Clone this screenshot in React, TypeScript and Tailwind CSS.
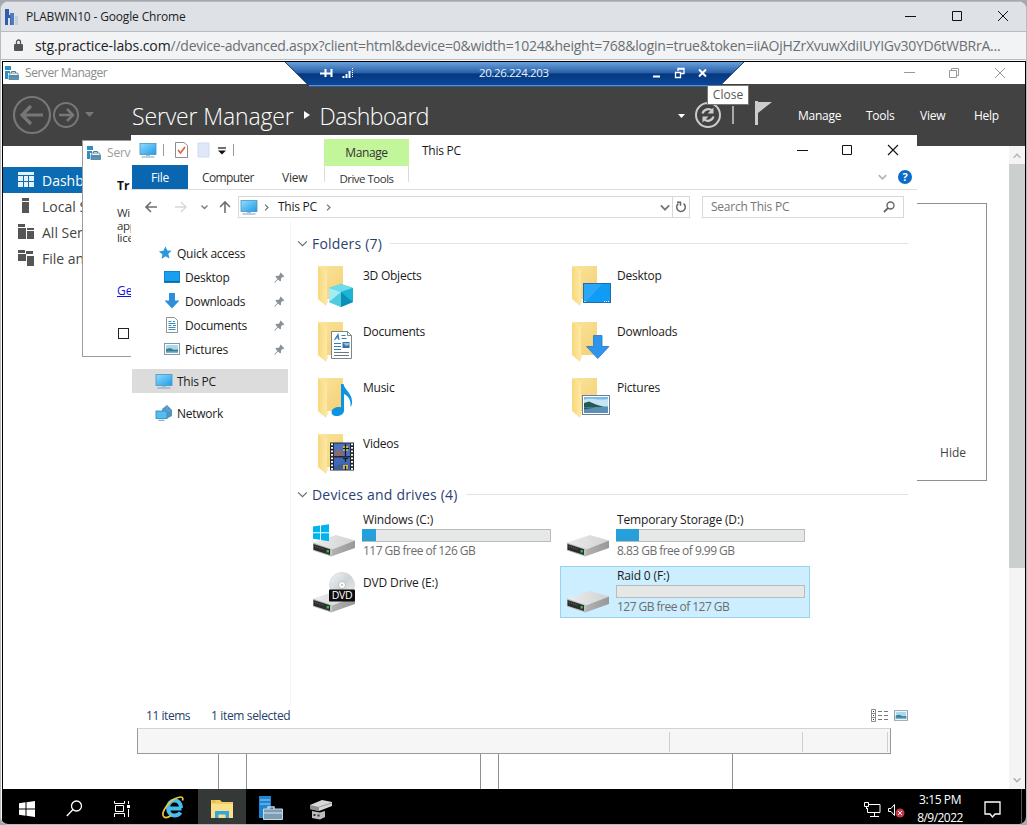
import React from "react";

type P = { className?: string };

const Monitor = ({ className = "w-[18px] h-[16px]" }: P) => (
  <svg viewBox="0 0 18 16" className={className}>
    <defs>
      <linearGradient id="mon" x1="0" y1="0" x2="1" y2="1">
        <stop offset="0" stopColor="#8fdcff" />
        <stop offset="1" stopColor="#1f9be6" />
      </linearGradient>
    </defs>
    <rect x="1" y="1.500" width="16" height="11" fill="url(#mon)" stroke="#4f93bd" strokeWidth=".8" />
    <path d="M7 13.500h4" stroke="#9cc0d4" strokeWidth="1" />
    <path d="M2.500 15h13" stroke="#6fa6c4" strokeWidth="1" />
  </svg>
);

const ServerIcon = ({ className = "w-[14px] h-[14px]" }: P) => (
  <svg viewBox="0 0 14 14" className={className}>
    <path d="M0 0h6v4H0zM0 5h5v2H3v6H0z" fill="#2f8fc0" />
    <path d="M6.500 7V5.500h4V7" fill="none" stroke="#4b7f9c" />
    <path d="M5 7h7.500l1 2.500H4z" fill="#e9f2f7" stroke="#4b7f9c" strokeWidth=".8" />
    <rect x="4" y="10" width="9.500" height="3.500" fill="#5d93b2" stroke="#4b7f9c" strokeWidth=".8" />
  </svg>
);

const Pin = () => (
  <svg viewBox="0 0 12 12" className="w-[11px] h-[11px]">
    <path d="M7.200.6l4.200 4.200-1 .6-.8-.2-2 2 .1 2.200-1 1-2.300-2.300L1 11.600l-.6-.5L3.700 7.500 1.500 5.200l1-1 2.200.1 2-2-.2-.8z" fill="#8a9299" />
  </svg>
);

const Chevron = ({ className }: P) => (
  <svg viewBox="0 0 12 8" className={className} fill="none" stroke="currentColor" strokeWidth="1.300">
    <path d="M1 1.500l5 5 5-5" />
  </svg>
);

const BoldChevron = ({ className }: P) => (
  <svg viewBox="0 0 12 8" className={className} fill="none" stroke="currentColor" strokeWidth="2.200">
    <path d="M1 1.500l5 5 5-5" />
  </svg>
);

const MiniPicture = ({ className = "w-4 h-3" }: P) => (
  <svg viewBox="0 0 16 12" className={className}>
    <rect x=".5" y=".5" width="15" height="11" fill="#fff" stroke="#8796a0" />
    <rect x="2" y="2" width="12" height="8" fill="#a9d9f2" />
    <path d="M2 6l4-1 4 1.800 4-.3V10H2z" fill="#3f7f92" />
    <path d="M2 8.500h12V10H2z" fill="#78b5d8" />
  </svg>
);

const Folder = ({ children }: { children?: React.ReactNode }) => (
  <svg viewBox="0 0 46 44" className="w-[46px] h-[44px]">
    <defs>
      <linearGradient id="fback" x1="0" y1="0" x2="1" y2="1">
        <stop offset="0" stopColor="#fbe59c" />
        <stop offset="1" stopColor="#f3cf74" />
      </linearGradient>
      <linearGradient id="ffront" x1="0" y1="0" x2="1" y2="0">
        <stop offset="0" stopColor="#f7d77c" />
        <stop offset="1" stopColor="#fee9a6" />
      </linearGradient>
    </defs>
    <path d="M3 1h25v33H12z" fill="url(#fback)" />
    <path d="M3 1.500l9 4.500v31l-1.500 3.500L3 34z" fill="url(#ffront)" />
    <path d="M10.500 40.500L12 37V34" stroke="#f2d387" strokeWidth=".6" fill="none" />
    {children}
  </svg>
);

const Cube = () => (
  <g>
    <path d="M26 19l12 4v14l-12 5-12-5V23z" fill="#35c0dd" />
    <path d="M26 19l12 4-12 4-12-4z" fill="#6bdcec" />
    <path d="M14 23l12 4v15l-12-5z" fill="#a5ebf3" />
    <path d="M26 27v15l-12-5z" fill="#4fcbe0" />
    <path d="M26 27l12-4v14z" fill="#1cb3d6" />
    <path d="M26 27v15l12-5z" fill="#0792b5" />
  </g>
);

const DesktopOverlay = () => (
  <g>
    <rect x="14.500" y="18.500" width="27" height="19" fill="#109bf5" stroke="#1f6ea5" />
    <path d="M15 19h18L17 37h-2z" fill="#2ba7f8" />
    <path d="M15.500 36.500h2M35 36.500h5" stroke="#fff" strokeDasharray="1 1" />
  </g>
);

const DocOverlay = () => (
  <g>
    <path d="M16.500 10.500h16l4 4v23h-20z" fill="#fff" stroke="#7d868c" />
    <path d="M32.500 10.500v4h4" fill="none" stroke="#7d868c" />
    <path d="M19.500 19l3.500-5.500 1 5.500M20.500 17h3M26.500 14.500h4M26.500 17.500h5M19 22.500h7M19 25.500h7M19 28.500h7" stroke="#2b7fb8" fill="none" strokeWidth="1.200" />
    <rect x="27.500" y="21" width="7" height="6" fill="#3f6f9f" />
    <path d="M28 22h6v2l-3 1z" fill="#8cc2e8" />
    <path d="M19 31.500h15M19 34.500h15" stroke="#6d7880" />
  </g>
);

const DownOverlay = () => (
  <path d="M24.500 14.500h8.500v11h7L28.700 37.500 17.500 25.500h7z" fill="#2f95ec" stroke="#2579c6" strokeWidth=".8" />
);

const MusicOverlay = () => (
  <path d="M26 7h2.500c1 6.500 9.500 9 8.500 19.500-.3 1.500-1 3-1.600 3.500C36.500 23 33 18.500 29 17v16.500c0 3-3 5.500-7 5.500s-6-2-5.300-4.800c.8-3 5-5 9.300-3.900z" fill="#0c93e4" />
);

const PictureOverlay = () => (
  <g>
    <rect x="13.500" y="18.500" width="27" height="19" fill="#fff" stroke="#6d7f96" />
    <rect x="15" y="20" width="24" height="16" fill="#79bbe6" />
    <path d="M15 23c6-3 14 1 24-1v7H15z" fill="#c6e4f4" />
    <path d="M15 26l5-1.500 7 3 8 2.500H15z" fill="#245b50" />
    <path d="M15 30h24v6H15z" fill="#5c8fb4" />
    <path d="M15 32.500l12-2H15z" fill="#2d5872" />
  </g>
);

const VideoOverlay = () => (
  <g>
    <rect x="15" y="9.500" width="24" height="28" fill="#23262b" />
    <rect x="19" y="10.500" width="16" height="12.500" fill="#4a72c4" />
    <rect x="19" y="24.500" width="16" height="12.500" fill="#3f68b8" />
    <path d="M19 19l5-3 3 3 3 4H19z" fill="#8b6a6e" />
    <path d="M19 33l6-2 10 2v4H19z" fill="#3c5f9c" />
    <path d="M28 13h5v5h-5zM28 32h5v4h-5z" fill="#dcb132" />
    <path d="M30.500 11v12M28 15.500h6M28 25.500h5M30.500 25v4M30.500 33v4" stroke="#17191d" strokeWidth="1.200" />
    <path d="M17 10.500v27M37 10.500v27" stroke="#fff" strokeWidth="2" strokeDasharray="1.800 1.700" />
  </g>
);

const Drive = ({ kind }: { kind?: "win" | "dvd" }) => (
  <svg viewBox="0 0 46 44" className="w-[46px] h-[44px]">
    <defs>
      <linearGradient id="dtop" x1="0" y1="0" x2="1" y2="0">
        <stop offset="0" stopColor="#ececec" />
        <stop offset="1" stopColor="#d2d2d2" />
      </linearGradient>
      <linearGradient id="dside" x1="0" y1="0" x2="1" y2="0">
        <stop offset="0" stopColor="#b3b3b3" />
        <stop offset="1" stopColor="#989898" />
      </linearGradient>
      <linearGradient id="disc" x1="0" y1="0" x2="1" y2="1">
        <stop offset="0" stopColor="#f4f6f6" />
        <stop offset=".5" stopColor="#cfd4d6" />
        <stop offset="1" stopColor="#eef0f0" />
      </linearGradient>
    </defs>
    <path d="M1 29.500L24 22l19 5.500-23 9z" fill="url(#dtop)" />
    <path d="M20 36.500l23-9V35l-24 8.500z" fill="url(#dside)" />
    <path d="M1 29.500l19 6.500-1 7.500L1 37.500z" fill="#b9bcbc" />
    <path d="M1.500 31l16.500 5.200v5.800L1.500 36.800z" fill="#2a2d2c" />
    <path d="M3 33.500l9 3" stroke="#6d7070" strokeDasharray="1 1" />
    <rect x="14.500" y="37" width="2.500" height="2.500" fill="#35b84a" />
    {kind === "win" && (
      <path d="M1 13.600l7-1v6.600H1zM9 12.400L17 11.200v8H9zM1 20.200h7v6.600l-7-1zM9 20.200h8v8l-8-1.200z" fill="#00b4f0" />
    )}
    {kind === "dvd" && (
      <g>
        <circle cx="30" cy="16" r="12.500" fill="url(#disc)" stroke="#c8cccd" strokeWidth=".6" />
        <circle cx="30" cy="16" r="3.500" fill="#fff" stroke="#aeb3b5" strokeWidth=".8" />
        <circle cx="30" cy="16" r="1.300" fill="#c9cdcf" />
        <rect x="17" y="20.500" width="26" height="12" rx="1" fill="#0c0c0c" />
        <text x="30" y="30.300" textAnchor="middle" fontSize="10.500" fill="#fff" fontFamily="Open Sans, sans-serif">DVD</text>
      </g>
    )}
  </svg>
);

const folders = [
  { name: "3D Objects", art: <Cube /> },
  { name: "Desktop", art: <DesktopOverlay /> },
  { name: "Documents", art: <DocOverlay /> },
  { name: "Downloads", art: <DownOverlay /> },
  { name: "Music", art: <MusicOverlay /> },
  { name: "Pictures", art: <PictureOverlay /> },
  { name: "Videos", art: <VideoOverlay /> },
];

type DriveInfo = { name: string; kind?: "win" | "dvd"; fill?: number; free?: string; selected?: boolean };
const drives: DriveInfo[] = [
  { name: "Windows (C:)", kind: "win", fill: 14, free: "117 GB free of 126 GB" },
  { name: "Temporary Storage (D:)", fill: 23, free: "8.83 GB free of 9.99 GB" },
  { name: "DVD Drive (E:)", kind: "dvd" },
  { name: "Raid 0 (F:)", fill: 0, free: "127 GB free of 127 GB", selected: true },
];

const GroupTitle = ({ children, className = "" }: { children: React.ReactNode; className?: string }) => (
  <div className={"flex items-center pl-[6px] text-[14px] tracking-[0.2px] text-[#2b3f72] " + className}>
    <Chevron className="w-[11px] h-[7px] text-[#5f6b78]" />
    <span className="ml-1 whitespace-nowrap">{children}</span>
    <span className="ml-2 h-px flex-1 bg-[#e2e3e4]" />
  </div>
);

const NavPane = () => (
  <div className="flex w-[160px] shrink-0 flex-col border-r border-[#f3f3f3] pt-[19px]">
    <div className="flex h-6 items-center pl-[27px]">
      <svg viewBox="0 0 14 14" className="w-[14px] h-[14px]">
        <path d="M7.500.5l1.800 4 4.400.2-3.400 3 1.200 4.800-4-2.300L3.500 13l1-4.500L.8 5.600l4.500-.8z" fill="#2b97dc" />
      </svg>
      <span className="ml-[5px] mt-px">Quick access</span>
    </div>
    {[
      ["Desktop", <svg key="d" viewBox="0 0 16 12" className="w-4 h-3"><rect x=".5" y=".5" width="15" height="11" fill="#17a0f2" stroke="#1683c8" /><path d="M1 10.500h14" stroke="#0b659f" /></svg>],
      ["Downloads", <svg key="w" viewBox="0 0 16 16" className="w-4 h-4"><path d="M5 0h6v7.500h4.500L8 15.500.5 7.500H5z" fill="#2d8fdc" /></svg>],
      ["Documents", <svg key="o" viewBox="0 0 16 16" className="w-4 h-4"><path d="M2.500.5h8l3 3v12h-11z" fill="#fff" stroke="#8a949a" /><path d="M4.500 4.500h3M9 4.500h2M4.500 6.500h7M4.500 8.500h3M9 8.500h3M4.500 10.500h7M4.500 12.500h7" stroke="#3b8cc0" /></svg>],
      ["Pictures", <MiniPicture key="p" />],
    ].map(([name, icon]) => (
      <div key={name as string} className="flex h-6 items-center pl-[33px] pr-[5px]">
        <span className="flex w-4 justify-center">{icon}</span>
        <span className="ml-[5px] mt-px flex-1">{name}</span>
        <Pin />
      </div>
    ))}
    <div className="mt-2 mr-[2px] ml-px flex h-6 items-center bg-[#dcdcdc] pl-[23px]">
      <Monitor />
      <span className="ml-[4px] mt-px">This PC</span>
    </div>
    <div className="mt-2 flex h-6 items-center pl-[24px]">
      <svg viewBox="0 0 18 16" className="w-[18px] h-4">
        <path d="M12 0l5 5v6l-5 2.500L7 10V4z" fill="#4e95bf" />
        <path d="M12 0v12M7.500 4.500c3 1.500 6 1.500 9 0" stroke="#6fb0d4" fill="none" />
        <rect x="1" y="6" width="11" height="7.500" fill="#56bdf0" stroke="#2f83b6" strokeWidth=".8" />
        <path d="M3.500 15.300h6" stroke="#5da0c5" />
      </svg>
      <span className="ml-[4px] mt-px">Network</span>
    </div>
  </div>
);

const Explorer = () => (
  <section className="absolute left-[131px] top-[135px] flex h-[593px] w-[786px] flex-col bg-white text-[12px] tracking-[-0.25px] text-[#1b1b1b]">
    <header className="flex h-[55px] border-b border-[#dcdddd]">
      <div className="flex w-[193px] flex-col">
        <div className="flex h-[31px] items-center pl-2">
          <Monitor />
          <i className="ml-[6px] h-3 w-px bg-[#9a9a9a]" />
          <svg viewBox="0 0 13 16" className="ml-[11px] w-[13px] h-4"><path d="M.5.5h8.500l3.500 3v12H.5z" fill="#fff" stroke="#918b89" /><path d="M3 8l2.500 3L10 5" fill="none" stroke="#d9663e" strokeWidth="1.700" /></svg>
          <svg viewBox="0 0 13 16" className="ml-[9px] w-[13px] h-4"><path d="M1 1h11v14H1z" fill="#dfe7fa" stroke="#cfdaf1" /></svg>
          <svg viewBox="0 0 8 8" className="ml-[8px] mt-[2px] w-2 h-2"><path d="M0 1h8" stroke="#111" strokeWidth="1.200" /><path d="M0 3.500h8L4 7.500z" fill="#111" /></svg>
          <i className="ml-[7px] h-3 w-px bg-[#9a9a9a]" />
        </div>
        <div className="flex h-6 items-center">
          <div className="ml-px flex h-6 w-14 items-center justify-center bg-[#0a66b0] pt-[2px] text-white">File</div>
          <span className="ml-[14px] mt-[2px] w-[52px] whitespace-nowrap tracking-[-0.600px] text-[#333]">Computer</span>
          <span className="ml-[28px] mt-[2px] text-[#333]">View</span>
        </div>
      </div>
      <div className="flex w-[85px] flex-col pt-1 text-[#333]">
        <div className="flex h-[27px] items-center justify-center bg-[#c3f59b] pt-px tracking-[-0.400px]">Manage</div>
        <div className="flex h-[16px] justify-center border-x border-[#dadada] text-[11.500px] leading-[25px] tracking-[-0.500px] whitespace-nowrap">Drive Tools</div>
      </div>
      <div className="flex flex-1 flex-col">
        <div className="flex h-[31px] items-center">
          <span className="ml-[13px] mt-[2px] flex-1">This PC</span>
          <svg viewBox="0 0 102 12" className="mr-[18px] w-[102px] h-3" fill="none" stroke="#111"><path d="M0 6.500h11M45.500 1.500h9v9h-9z" /><path d="M91 1l10 10M101 1L91 11" strokeWidth="1.100" /></svg>
        </div>
        <div className="flex h-6 items-center justify-end pr-[5px]">
          <BoldChevron className="mr-[11px] w-[9px] h-[6px] text-[#b5b5b5]" />
          <span className="flex size-[14px] items-center justify-center rounded-full bg-[#0d6cc8] text-[11px] font-bold text-white">?</span>
        </div>
      </div>
    </header>
    <div className="flex h-8 items-center pt-[2px]">
      <svg viewBox="0 0 92 14" className="ml-[13px] w-[92px] h-[14px]" fill="none">
        <path d="M2 7h11M7 2L2 7l5 5" stroke="#6b6f73" strokeWidth="1.600" />
        <path d="M31 7h11M37 2l5 5-5 5" stroke="#d5d7d9" strokeWidth="1.400" />
        <path d="M57.500 5.500l3 3 3-3" stroke="#777" strokeWidth="1.300" />
        <path d="M81 13V2M76 7l5-5 5 5" stroke="#6b6f73" strokeWidth="1.600" />
      </svg>
      <div className="ml-[2px] flex h-[22px] w-[452px] items-center border border-[#d9d9d9]">
        <Monitor className="ml-[1px] w-[18px] h-4" />
        <BoldChevron className="ml-[5px] w-[7px] h-[5px] -rotate-90 text-[#777]" />
        <span className="ml-[8px]">This PC</span>
        <BoldChevron className="ml-[8px] w-[7px] h-[5px] -rotate-90 text-[#777]" />
        <span className="flex-1" />
        <BoldChevron className="mr-[2px] w-[10px] h-[7px] text-[#777]" />
        <span className="flex h-full w-[17px] items-center justify-center border-l border-[#d9d9d9]">
          <svg viewBox="0 0 12 12" className="w-[12px] h-[12px]" fill="none" stroke="#666" strokeWidth="1.500"><path d="M8.500 2.600A4.300 4.300 0 1 1 3.500 2.600M2 1.200h3.500v3.500" /></svg>
        </span>
      </div>
      <div className="ml-3 flex h-[22px] w-[202px] items-center border border-[#d9d9d9] pl-2 pr-2 text-[#767676]">
        <span className="flex-1">Search This PC</span>
        <svg viewBox="0 0 12 12" className="w-3 h-3" fill="none" stroke="#666"><circle cx="7.500" cy="4.500" r="3.500" strokeWidth="1.400" /><path d="M5 7L1 11" strokeWidth="1.800" /></svg>
      </div>
    </div>
    <div className="flex h-[483px]">
      <NavPane />
      <div className="flex flex-1 flex-col pr-[9px]">
        <GroupTitle className="h-[36px] pt-[6px]">Folders (7)</GroupTitle>
        <div className="grid grid-cols-[254px_250px] auto-rows-[56px] pl-[15px]">
          {folders.map((f) => (
            <div key={f.name} className="flex pl-[9px] pt-[7px]">
              <Folder>{f.art}</Folder>
              <span className="ml-[2px] mt-[1px] h-5 leading-5">{f.name}</span>
            </div>
          ))}
        </div>
        <GroupTitle className="h-[28px] pb-[3px]">Devices and drives (4)</GroupTitle>
        <div className="grid grid-cols-[250px_250px] auto-rows-[52px] gap-1 pl-[15px]">
          {drives.map((d) => (
            <div key={d.name} className={d.selected ? "flex border border-[#99d1f2] bg-[#cceeff] pl-[5px] pr-1" : "flex border border-transparent pl-[5px] pr-1"}>
              <span className="mt-[2px]"><Drive kind={d.kind} /></span>
              <div className={d.kind === "dvd" ? "flex flex-1 flex-col pt-[7px]" : "flex flex-1 flex-col"}>
                <span className="ml-[5px] h-[18px] leading-[17px] tracking-[-0.150px] whitespace-nowrap">{d.name}</span>
                {d.free && (
                  <>
                    <div className="ml-1 h-[13px] w-[189px] border border-[#b9bcbb] bg-[#e5e8e6]">
                      <div className="-ml-px -mt-px h-[12px] bg-[#25a0da]" style={{ width: d.fill }} />
                    </div>
                    <span className="ml-[5px] h-[18px] leading-[18px] tracking-[-0.530px] whitespace-nowrap text-[#6d6d6d]">{d.free}</span>
                  </>
                )}
              </div>
            </div>
          ))}
        </div>
      </div>
    </div>
    <footer className="flex h-[20px] items-center pl-[15px] pr-[9px] text-[#24406b]">
      <span className="mt-[2px] w-[44px] whitespace-nowrap tracking-[-0.450px]">11 items</span>
      <span className="ml-[21px] mt-[2px] flex-1 tracking-[-0.350px]">1 item selected</span>
      <svg viewBox="0 0 17 13" className="w-[17px] h-[13px]" fill="none"><path d="M.5.500h4v12h-4zM.5 4.500h4M.5 8.500h4" stroke="#8a8a8a" /><path d="M7 2.500h4M13 2.500h4M7 6.500h4M13 6.500h4M7 10.500h4M13 10.500h4" stroke="#777" /><path d="M2 2.500h1M2 6.500h1M2 10.500h1" stroke="#333" /></svg>
      <MiniPicture className="ml-[6px] w-[14px] h-[11px]" />
    </footer>
  </section>
);

const TrialDialog = () => (
  <section className="absolute left-[82px] top-[140px] h-[217px] w-[49px] overflow-hidden border border-r-0 border-[#9b9b9b] bg-white">
    <div className="flex h-6 items-center pl-1 text-[12px] text-[#9a9a9a]">
      <ServerIcon className="h-[14px] w-[14px] shrink-0" />
      <span className="ml-[6px] tracking-[-0.200px]">Serve</span>
    </div>
    <div className="pl-[34px] text-[12px] text-[#333]">
      <h3 className="mt-[11px] h-5 leading-5 font-bold text-[#111]">Tr</h3>
      <p className="mt-[11px] leading-[12.500px] text-[11.500px] tracking-[-0.300px]">Wi<br />app<br />lice</p>
      <a className="mt-[36px] block h-5 leading-5 text-[#1414dd] underline">Ge</a>
      <div className="mt-[27px] ml-px size-[11px] border border-[#222]" />
    </div>
  </section>
);

const RdpBar = () => (
  <div className="absolute left-[285px] top-[62px] h-[25px] w-[459px]">
    <svg viewBox="0 0 459 25" className="absolute inset-0 h-full w-full">
      <defs>
        <linearGradient id="rdp" x1="0" y1="0" x2="0" y2="1">
          <stop offset="0" stopColor="#6aa0d8" />
          <stop offset=".42" stopColor="#2a62ab" />
          <stop offset=".48" stopColor="#07387e" />
          <stop offset="1" stopColor="#0a4aa0" />
        </linearGradient>
      </defs>
      <path d="M0 0h459l-25 25H25z" fill="url(#rdp)" />
      <path d="M0 0l25 24.500h409L459 0" fill="none" stroke="#173a6c" />
      <path d="M24 23.800h411" stroke="#7fb0e2" />
    </svg>
    <div className="relative flex h-[22px] items-center">
      <svg viewBox="0 0 34 12" className="ml-[35px] w-[34px] h-3" stroke="#fff" fill="none">
        <path d="M0 6.500h5M5.500 2v8M5 6.500h6M11.500 2v8" strokeWidth="2" />
        <path d="M23.500 9v2M26.500 7v4M29.500 4v7" strokeWidth="2" /><path d="M32.500 1v10" strokeDasharray="1 1" />
      </svg>
      <span className="ml-[125px] w-[70px] whitespace-nowrap text-[11.500px] tracking-[-0.400px] text-[#e6f3ff]">20.26.224.203</span>
      <svg viewBox="0 0 56 12" className="ml-[103px] w-[56px] h-3" stroke="#fff" fill="none">
        <path d="M1 9.500h7" strokeWidth="2" /><path d="M23.500 5.500h5v5h-5zM26 4V1.500h6v5h-3M26 2h6" strokeWidth="1.300" /><path d="M47 2.500l7 7M54 2.500l-7 7" strokeWidth="2" />
      </svg>
    </div>
  </div>
);

const sideItems = [
  { label: "Dashb", d: "M0 0h16v3H0zM0 4h5v5H0zM6 4h4v5H6zM11 4h5v5h-5zM0 10h5v5H0zM6 10h4v5H6zM11 10h5v5h-5z" },
  { label: "Local S", d: "M4 0h7v3H4zM4 4h7v11H4z" },
  { label: "All Ser", d: "M0 0h7v3H0zM0 4h8v11H0zM9 4h7v2H9zM9 7h7v8H9z" },
  { label: "File an", d: "M0 0h7v3H0zM8 1h7v3H8zM0 4h8v7H0zM9 6h7v10H9z" },
];

const ServerManager = () => (
  <>
    <div className="flex h-[22px] items-center bg-white pl-[2px] text-[12px] text-[#8b8b8b]">
      <ServerIcon />
      <span className="ml-[6px] flex-1 tracking-[-0.450px]">Server Manager</span>
      <svg viewBox="0 0 104 12" className="mr-[17px] w-[104px] h-3" fill="none" stroke="#999"><path d="M0 5.500h11M45.500 3.500h7v7h-7zM47.500 3.500v-2h7v7h-2M91 1l10 10M101 1L91 11" /></svg>
    </div>
    <div className="flex h-[62px] items-center bg-[#424242] text-white">
      <svg viewBox="0 0 86 42" className="ml-[9px] w-[86px] h-[42px]" fill="none" stroke="#777">
        <circle cx="20" cy="21" r="18" strokeWidth="2.200" /><path d="M31 21H11M19 12l-9 9 9 9" strokeWidth="3.200" />
        <circle cx="54" cy="21" r="12" strokeWidth="2" /><path d="M47 21h13M55 15l6 6-6 6" strokeWidth="2.600" />
        <path d="M73 18h9l-4.500 5z" fill="#777" stroke="none" />
      </svg>
      <span className="ml-[34px] mt-[2px] whitespace-nowrap text-[23px] font-light tracking-[-0.150px]">Server Manager</span>
      <svg viewBox="0 0 6 8" className="mx-[10px] w-[6px] h-2"><path d="M0 0l6 4-6 4z" fill="#fff" /></svg>
      <span className="mt-[2px] flex-1 text-[23px] font-light tracking-[-0.600px]">Dashboard</span>
      <svg viewBox="0 0 96 40" className="w-[96px] h-10" fill="none" stroke="#ccc">
        <path d="M0 19h7l-3.500 4z" fill="#fff" stroke="none" />
        <circle cx="30" cy="20" r="12" strokeWidth="2" />
        <path d="M24.500 18.500a6 6 0 0 1 10-2.500M35.500 21.500a6 6 0 0 1-10 2.500" strokeWidth="2.200" /><path d="M35.500 12.500v6h-6zM24.500 27.500v-6h6z" fill="#ccc" stroke="none" />
        <path d="M55 11v18" strokeWidth="1.500" />
        <path d="M78.500 6v24" strokeWidth="3" /><path d="M80 7h14L80 18z" fill="#ccc" stroke="none" />
      </svg>
      <nav className="ml-[24px] mt-[2px] flex text-[12px] tracking-[-0.250px]">
        <span className="w-[68px]">Manage</span><span className="w-[54px]">Tools</span><span className="w-[54px]">View</span><span className="w-[51px]">Help</span>
      </nav>
    </div>
    <div className="flex h-[643px] bg-white">
      <div className="w-[79px] overflow-hidden pt-[21px] text-[14px] text-[#444]">
        {sideItems.map((s, i) => (
          <div key={s.label} className={i === 0 ? "flex h-[26px] items-center bg-[#0b6cb4] pl-[15px] text-white" : "flex h-[26px] items-center pl-[15px]"}>
            <svg viewBox="0 0 16 16" className="w-4 h-4 shrink-0"><path d={s.d} fill={i === 0 ? "#e2f1fb" : "#555"} /></svg>
            <span className="ml-2 mt-px whitespace-nowrap">{s.label}</span>
          </div>
        ))}
      </div>
      <div className="flex flex-1 flex-col pr-[22px] pt-[57px] pl-[77px]">
        <div className="flex h-[278px] items-end justify-end border border-l-0 border-[#8f8f8f] pr-5 pb-[18px] text-[12px] text-[#444]">Hide</div>
        <div className="mt-[126px] flex flex-1 gap-[17px]">
          <div className="w-[60px] border-r border-[#8f8f8f]" />
          <div className="ml-[10px] w-[235px] border-x border-[#8f8f8f]" />
          <div className="w-[235px] border-x border-[#8f8f8f]" />
        </div>
      </div>
      <div className="flex w-4 flex-col items-center bg-[#f4f4f4] py-[5px]">
        <BoldChevron className="mt-[2px] w-[8px] h-[6px] rotate-180 text-[#b5b5b5]" />
        <div className="mt-[5px] h-[404px] w-full bg-[#cbcfcd]" />
        <span className="flex-1" />
        <BoldChevron className="mb-px w-[8px] h-[6px] text-[#aaa]" />
      </div>
    </div>
  </>
);

const Taskbar = () => (
  <div className="flex h-[35px] items-center bg-black text-[12px] text-white">
    <div className="flex w-[47px] justify-center"><svg viewBox="0 0 16 16" className="mt-1 w-4 h-4"><path d="M0 2.200l6.500-.9v6.200H0zM7.500 1.200L16 0v7.500H7.500zM0 8.500h6.500v6.200L0 13.800zM7.500 8.500H16V16l-8.500-1.200z" fill="#fff" /></svg></div>
    <div className="flex w-12 justify-center"><svg viewBox="0 0 17 17" className="mt-1 w-[17px] h-[17px]" fill="none" stroke="#fff" strokeWidth="1.300"><circle cx="10.500" cy="6" r="5" /><path d="M7 9.500L.8 16" /></svg></div>
    <div className="flex w-12 justify-center"><svg viewBox="0 0 17 16" className="mt-1 w-[17px] h-4" fill="none" stroke="#fff"><path d="M.5 0v2.500h10V0M1.500 4.500h8v6h-8zM.5 16v-3.500h10V16M14.500 0v3M14.500 8v8" /><path d="M13 4h3v3h-3z" fill="#fff" stroke="none" /></svg></div>
    <div className="flex w-[52px] justify-center pl-[1px]">
      <svg viewBox="0 0 24 24" className="w-6 h-6" fill="none">
        <path d="M20.500 13.500H8.500M20 13c0-5-3-7.500-6.500-7.500S7 8.500 7 13s3 7.500 6.700 7.500c2.500 0 4.500-1 5.800-3" stroke="#46bdee" strokeWidth="4" />
        <path d="M3 22C-1 18 8 5 17 2.500c4-1.300 5.500 0 4.500 3M3 22c1.800 1.200 4.500.2 7-1.500" stroke="#efc63a" strokeWidth="1.700" />
      </svg>
    </div>
    <div className="flex h-full w-12 items-center justify-center bg-[#343836]">
      <svg viewBox="0 0 22 18" className="mt-1 w-[22px] h-[18px]"><path d="M0 0h9l2 2h11v16H0z" fill="#f4cd62" /><path d="M0 4h22v14H0z" fill="#fbe08c" /><path d="M4 18v-7h14v7h-3.500v-3.500h-7V18z" fill="#31a8dc" /><path d="M1.500 1.200h3" stroke="#d59a30" /></svg>
    </div>
    <div className="flex w-[50px] justify-center">
      <svg viewBox="0 0 24 24" className="mt-[3px] w-6 h-6"><path d="M0 0h12v22H0z" fill="#1f86d3" /><path d="M1 4h10M1 8h10" stroke="#bfe2fa" strokeWidth=".8" /><path d="M9 13v-2h6v2" fill="none" stroke="#c5dae7" strokeWidth="1.500" /><path d="M4.500 13h19v10.500h-19z" fill="#7d9db3" stroke="#c5dae7" /><path d="M5 17h18" stroke="#d9e8f1" /></svg>
    </div>
    <div className="flex w-[49px] justify-center">
      <svg viewBox="0 0 22 20" className="mt-[6px] w-[22px] h-5"><path d="M0 5L12 0l10 2v4L9 11 0 9z" fill="#d8d8d8" /><path d="M0 5l9 2v4L0 9z" fill="#8e8e8e" /><path d="M9 7l13-4" stroke="#999" /><path d="M2 11l8 1.500 5-1.500v6l-5 2.500L2 18z" fill="#bdbdbd" /><path d="M3.500 14h2v2h-2zM7.500 14.500h2v2h-2z" fill="#333" /></svg>
    </div>
    <span className="flex-1" />
    <svg viewBox="0 0 42 18" className="mt-2 w-[42px] h-[18px]" fill="none" stroke="#fff">
      <path d="M5 2.500h11v8H3.500V6M6 14.500h9M10.500 11v3M.5.500h4v4h-4zM2.500 5v2" />
      <path d="M24.500 6.500h2.500l3.500-4v11l-3.500-4h-2.500z" /><circle cx="36" cy="11" r="4.500" fill="#c93744" stroke="none" /><path d="M34 9l4 4M38 9l-4 4" />
    </svg>
    <div className="ml-[8px] mt-[4px] w-[52px] whitespace-nowrap text-center leading-[18px] tracking-[-0.400px]">3:15 PM<br /><span className="tracking-[-0.550px]">8/9/2022</span></div>
    <svg viewBox="0 0 17 17" className="mt-[5px] ml-[18px] mr-[20px] w-[17px] h-[17px]" fill="none" stroke="#fff" strokeWidth="1.300"><path d="M1 1h15v12h-5l-2.500 3L6 13H1z" /></svg>
    <i className="mr-[3px] h-full w-px bg-[#555]" />
  </div>
);

export default function App() {
  return (
    <main className="relative h-[825px] w-[1027px] overflow-hidden bg-[#a7a8ad] pt-px font-['Open_Sans','Noto_Sans',sans-serif]">
      <div className="flex h-[824px] flex-col overflow-hidden rounded-lg border border-[#b8babf] bg-[#f6f7f8]">
        <div className="flex h-[29px] items-center bg-[#dee1e6] pl-[4px] text-[12px] text-[#1d1d1d]">
          <svg viewBox="0 0 16 16" className="w-4 h-4"><path d="M0 0h4v6h3v10H5V9H3v7H0z" fill="#2f5fab" /><path d="M5 4h4v12H6z" fill="#4f7cc0" /><path d="M10 7h3v9h-3z" fill="#c6ccd8" /></svg>
          <span className="ml-[5px] flex-1 tracking-[-0.160px]">PLABWIN10 - Google Chrome</span>
          <svg viewBox="0 0 104 12" className="mr-[17px] mb-[2px] w-[104px] h-3" fill="none" stroke="#111"><path d="M0 6.500h11M47.500 1.500h9v9h-9zM93 1l10 10M103 1L93 11" /></svg>
        </div>
        <div className="flex h-[29px] items-center border-y border-[#b9bcc0] bg-[#f1f3f4] pl-[13px] text-[14px] text-[#6b6f73]">
          <svg viewBox="0 0 9 12" className="mb-[2px] w-[9px] h-3 shrink-0"><path d="M2.500 5V3a2 2 0 0 1 4 0v2" fill="none" stroke="#555" strokeWidth="1.300" /><rect y="5" width="9" height="7" rx="1" fill="#555" /></svg>
          <span className="ml-[12px] whitespace-nowrap tracking-[-0.240px]"><span className="tracking-[-0.100px] text-[#202124]">stg.practice-labs.com</span>//device-advanced.aspx?client=html&amp;device=0&amp;width=1024&amp;height=768&amp;login=true&amp;token=iiAOjHZrXvuwXdiIUYIGv30YD6tWBRrA...</span>
        </div>
        <div className="ml-px mt-[1px] flex flex-col border border-b-0 border-black">
          <ServerManager />
          <Taskbar />
        </div>
      </div>
      <TrialDialog />
      <Explorer />
      <div className="absolute left-[137px] top-[728px] flex h-[26px] w-[754px] border border-[#999] border-t-[#d3d3d3] bg-[#f6f6f6] pt-[3px]">
        <div className="h-5 w-[532px] border-r border-[#d0d0d0]" />
        <div className="h-5 w-[133px] border-r border-[#d0d0d0]" />
        <div className="h-5 w-[85px] border-r border-[#d0d0d0]" />
      </div>
      <RdpBar />
      <div className="absolute left-[707px] top-[85px] flex h-5 w-[42px] items-center justify-center border border-[#777] bg-white text-[12px] text-[#555]">Close</div>
    </main>
  );
}
